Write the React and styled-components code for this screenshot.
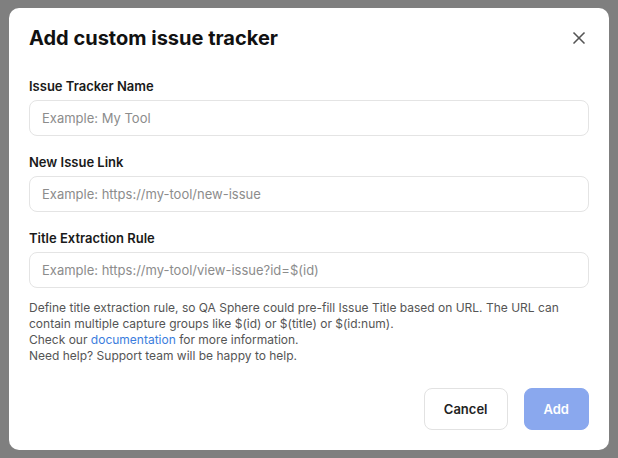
import React from 'react';
import styled, { createGlobalStyle } from 'styled-components';
import { X } from 'lucide-react';

const Global = createGlobalStyle`
  html, body { margin: 0; padding: 0; }
  body { font-family: Inter, "Noto Sans", sans-serif; }
  * { box-sizing: border-box; }
`;

const Backdrop = styled.div`
  width: 618px;
  height: 458px;
  background: #7f7f7f;
  display: flex;
  align-items: center;
  justify-content: center;
`;

const Modal = styled.div`
  width: 600px;
  height: 442px;
  background: #fff;
  border-radius: 10px;
  padding: 16px 20px 20px;
  display: flex;
  flex-direction: column;
`;

const Header = styled.div`
  display: flex;
  align-items: center;
  justify-content: space-between;
  height: 28px;
  margin-bottom: 24px;
`;

const Title = styled.h2`
  margin: 0;
  font-size: 20px;
  line-height: 28px;
  font-weight: 700;
  color: #111;
`;

const CloseButton = styled.button`
  border: 0;
  background: transparent;
  padding: 0;
  width: 20px;
  height: 20px;
  display: flex;
  align-items: center;
  justify-content: center;
  color: #555;
  cursor: pointer;
`;

const Field = styled.div`
  display: flex;
  flex-direction: column;
  gap: 4px;
  margin-bottom: ${({ $last }) => ($last ? '12px' : '16px')};
`;

const Label = styled.label`
  font-size: 13px;
  line-height: 20px;
  font-weight: 600;
  color: #1a1a1a;
`;

const Input = styled.input`
  height: 36px;
  border: 1px solid #e4e4e4;
  border-radius: 8px;
  padding: 0 12px;
  font-family: inherit;
  font-size: 13px;
  color: #111;
  outline: none;
  &::placeholder { color: #8c8c8c; }
`;

const Help = styled.p`
  margin: 0;
  font-size: 12px;
  line-height: 16px;
  color: #555;
`;

const Link = styled.a`
  color: #3b7ddd;
  text-decoration: none;
`;

const Footer = styled.div`
  margin-top: auto;
  display: flex;
  justify-content: flex-end;
  gap: 16px;
`;

const Button = styled.button`
  height: 42px;
  padding: 0 19px;
  border-radius: 8px;
  font-family: inherit;
  font-size: 13px;
  font-weight: 600;
  border: 1px solid ${({ $primary }) => ($primary ? '#8aa8ee' : '#e2e2e2')};
  background: ${({ $primary }) => ($primary ? '#8aa8ee' : '#fff')};
  color: ${({ $primary }) => ($primary ? '#fff' : '#222')};
  cursor: pointer;
`;

export default function App() {
  return (
    <>
      <Global />
      <Backdrop>
        <Modal>
          <Header>
            <Title>Add custom issue tracker</Title>
            <CloseButton aria-label="Close">
              <X size={20} strokeWidth={2} />
            </CloseButton>
          </Header>
          <Field>
            <Label>Issue Tracker Name</Label>
            <Input placeholder="Example: My Tool" />
          </Field>
          <Field>
            <Label>New Issue Link</Label>
            <Input placeholder="Example: https://my-tool/new-issue" />
          </Field>
          <Field $last>
            <Label>Title Extraction Rule</Label>
            <Input placeholder="Example: https://my-tool/view-issue?id=$(id)" />
          </Field>
          <Help>
            Define title extraction rule, so QA Sphere could pre-fill Issue Title based on URL. The URL can contain multiple capture groups like $(id) or $(title) or $(id:num).
            <br />
            Check our <Link href="#">documentation</Link> for more information.
            <br />
            Need help? Support team will be happy to help.
          </Help>
          <Footer>
            <Button>Cancel</Button>
            <Button $primary disabled>Add</Button>
          </Footer>
        </Modal>
      </Backdrop>
    </>
  );
}
